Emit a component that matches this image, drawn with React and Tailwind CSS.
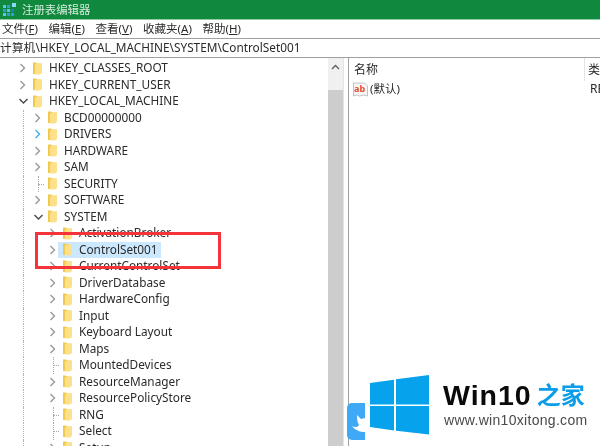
const rows = [
  ["HKEY_CLASSES_ROOT", 0, "r"],
  ["HKEY_CURRENT_USER", 0, "r"],
  ["HKEY_LOCAL_MACHINE", 0, "d"],
  ["BCD00000000", 1, "r"],
  ["DRIVERS", 1, "b"],
  ["HARDWARE", 1, "r"],
  ["SAM", 1, "r"],
  ["SECURITY", 1, "n"],
  ["SOFTWARE", 1, "r"],
  ["SYSTEM", 1, "d"],
  ["ActivationBroker", 2, "r"],
  ["ControlSet001", 2, "r", true],
  ["CurrentControlSet", 2, "r"],
  ["DriverDatabase", 2, "r"],
  ["HardwareConfig", 2, "r"],
  ["Input", 2, "r"],
  ["Keyboard Layout", 2, "r"],
  ["Maps", 2, "r"],
  ["MountedDevices", 2, "n"],
  ["ResourceManager", 2, "r"],
  ["ResourcePolicyStore", 2, "r"],
  ["RNG", 2, "n"],
  ["Select", 2, "n"],
  ["Setup", 2, "r"],
];

function Toggle({ kind }) {
  if (kind === "n") {
    return (
      <span className="relative block h-full w-[9px]">
        <span className="absolute left-[4px] top-0 h-full border-l border-dotted border-[#a8a8a8]" />
        <span className="absolute left-[4px] top-[8px] w-[6px] border-t border-dotted border-[#a8a8a8]" />
      </span>
    );
  }
  const stroke = kind === "b" ? "#3fb0ef" : kind === "d" ? "#4a4a4a" : "#999999";
  return (
    <svg width="9" height="10" viewBox="0 0 9 10" fill="none" stroke={stroke} strokeWidth="1.4">
      {kind === "d" ? <path d="M0.500 3l4 4 4-4" /> : <path d="M1.500 1l4 4-4 4" />}
    </svg>
  );
}

function Folder() {
  return (
    <svg width="10" height="13" viewBox="0 0 10 13" className="shrink-0">
      <path d="M1 0.500h3l1 1h3V12H1z" fill="#f2c94f" />
      <path d="M3 2.500L10 1v10l-2 1.500H3z" fill="#fde08a" />
    </svg>
  );
}

function Row({ label, level, kind, selected }) {
  return (
    <div className="flex h-[16.5px] items-center">
      {level === 0 && <div className="h-full w-[19px] shrink-0" />}
      {level >= 1 && (
        <>
          <div className="h-full w-[23px] shrink-0" />
          <div className="h-full w-[11px] shrink-0 border-l border-dotted border-[#b4b4b4]" />
        </>
      )}
      {level >= 2 && <div className="h-full w-[15px] shrink-0" />}
      <div className="flex h-full w-[9px] shrink-0 items-center">
        <Toggle kind={kind} />
      </div>
      <div className={`flex h-[16.5px] items-center pl-[4px] ${selected ? "bg-[#cce8ff]" : ""}`}>
        <Folder />
        <span className="ml-[7px] whitespace-nowrap pr-[3px] text-[11.8px] leading-none text-[#2a2a2a]">
          {label}
        </span>
      </div>
    </div>
  );
}

function Menu({ cn, k }) {
  return (
    <span className="whitespace-nowrap">
      {cn}(<span className="underline">{k}</span>)
    </span>
  );
}

export default function App() {
  return (
    <div
      className="relative flex h-[446px] w-[600px] flex-col overflow-hidden bg-white blur-[0.35px]"
      style={{ fontFamily: '"Noto Sans", "Noto Sans CJK SC", sans-serif' }}
    >
      <div className="flex h-[19px] shrink-0 items-center bg-[#10893e]">
        <svg className="ml-[3px]" width="14" height="14" viewBox="0 0 14 14">
          <rect x="0" y="2" width="3" height="3" fill="#5fc4ee" />
          <rect x="4" y="2" width="3" height="3" fill="#2e9fd8" />
          <rect x="0" y="6" width="3" height="3" fill="#2e9fd8" />
          <rect x="4" y="6" width="3" height="3" fill="#5fc4ee" />
          <rect x="0" y="10" width="3" height="3" fill="#5fc4ee" />
          <rect x="4" y="10" width="3" height="3" fill="#2e9fd8" />
          <rect x="8" y="6" width="3" height="3" fill="#1d7fbf" />
          <rect x="8" y="10" width="3" height="3" fill="#2e9fd8" />
          <rect x="9" y="0" width="4" height="4" fill="#8fd8f5" />
        </svg>
        <span className="ml-[5px] text-[11.4px] leading-none text-[#d4ebdc]">注册表编辑器</span>
      </div>
      <div className="h-[1px] shrink-0 bg-[#8fcba6]" />
      <div className="flex h-[18px] shrink-0 items-center gap-[10.700px] pl-[2px] text-[11.5px] leading-none text-[#2a2a2a]">
        <Menu cn="文件" k="F" />
        <Menu cn="编辑" k="E" />
        <Menu cn="查看" k="V" />
        <Menu cn="收藏夹" k="A" />
        <Menu cn="帮助" k="H" />
      </div>
      <div className="flex h-[20px] shrink-0 items-center whitespace-nowrap border-y border-[#a0a0a0] text-[11.8px] leading-none text-[#2a2a2a]">
        计算机\HKEY_LOCAL_MACHINE\SYSTEM\ControlSet001
      </div>
      <div className="flex min-h-0 flex-1">
        <div className="w-[328px] shrink-0 overflow-hidden pt-[2px]">
          {rows.map(([label, level, kind, sel]) => (
            <Row key={label} label={label} level={level} kind={kind} selected={sel} />
          ))}
        </div>
        <div className="flex w-[15px] shrink-0 flex-col bg-[#f0f0f0]">
          <div className="flex h-[32px] justify-center pt-[6px]">
            <svg width="9" height="6" viewBox="0 0 9 6" fill="none" stroke="#606060" strokeWidth="1.4">
              <path d="M1 5l3.500-3.500L8 5" />
            </svg>
          </div>
          <div className="flex-1 bg-[#cdcdcd]" />
        </div>
        <div className="w-[5px] shrink-0 border-l border-[#e4e4e4]" />
        <div className="min-w-0 flex-1 overflow-hidden border-l border-[#a0a0a0] text-[12px] leading-none text-[#2a2a2a]">
          <div className="flex h-[23px] items-center whitespace-nowrap pl-[5px]">
            <span className="w-[230px] shrink-0">名称</span>
            <span className="h-full w-[4px] shrink-0 border-l border-[#e4e4e4]" />
            <span className="shrink-0">类型</span>
          </div>
          <div className="flex h-[16px] items-center whitespace-nowrap pl-[4px]">
            <svg width="15" height="15" viewBox="0 0 15 15" className="shrink-0">
              <path d="M0.500 1h11l3 3v10l-4-1-4 1-3-1-3 1z" fill="#f6f6f6" stroke="#b5b5b5" strokeWidth="0.8" />
              <text x="1" y="9.500" fontSize="9" fontWeight="700" fill="#e2492a">ab</text>
            </svg>
            <span className="ml-[2px] w-[220px] shrink-0 text-[11.5px]">(默认)</span>
            <span className="shrink-0">REG_SZ</span>
          </div>
        </div>
      </div>

      <div className="pointer-events-none absolute left-[35px] top-[232px] h-[37px] w-[186px] border-[3px] border-[#f5333a]" />

      <div className="absolute left-[347px] top-[403px] h-[37px] w-[18px] rounded-l-[5px] bg-[#3fa9f5]">
        <svg width="18" height="37" viewBox="0 0 18 37">
          <path d="M10 12l4 4 4-1v14c-5 0-10-2-13-6 3 2 6 1 7-1-2-3-2-7-2-10z" fill="#ffffff" />
        </svg>
      </div>
      <svg className="absolute left-[370px] top-[375px]" width="60" height="60" viewBox="0 0 60 60">
        <path d="M0 8l24-3.300v24.800H0z" fill="#06a3ec" />
        <path d="M26 4.300L59 0v29.500H26z" fill="#06a3ec" />
        <path d="M0 31h24v24.500L0 52z" fill="#06a3ec" />
        <path d="M26 31h33v28.500L26 55.800z" fill="#06a3ec" />
      </svg>
      <div className="absolute left-[443px] top-[377px] flex items-center whitespace-nowrap">
        <span
          className="text-[28.500px] font-bold leading-[36px] tracking-[1px] text-[#0a0a0a]"
          style={{ fontFamily: '"Liberation Sans", sans-serif' }}
        >
          Win10
        </span>
        <span className="ml-[5px] text-[24px] font-bold leading-[36px] text-[#0b9de8]">之家</span>
      </div>
      <div
        className="absolute left-[444px] top-[412px] whitespace-nowrap text-[14px] leading-[16px] tracking-[0.3px] text-[#4a4a4a]"
        style={{ fontFamily: '"Liberation Sans", sans-serif' }}
      >
        www.win10xitong.com
      </div>
    </div>
  );
}
